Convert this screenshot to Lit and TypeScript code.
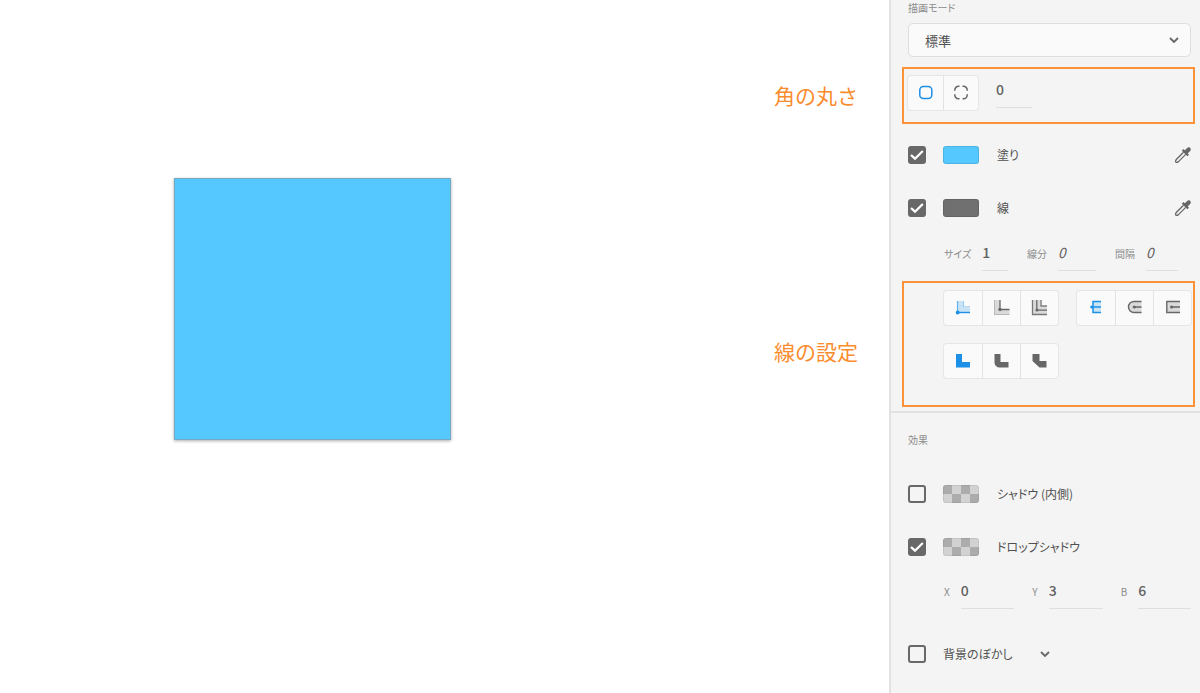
import { LitElement, html, css, svg, nothing, TemplateResult } from "lit";
import { customElement, property, state } from "lit/decorators.js";
import { classMap } from "lit/directives/class-map.js";

const ICONS: Record<string, TemplateResult> = {
  cornerAll: svg`<rect x="1.800" y="1.500" width="12" height="12" rx="3.5" fill="none" stroke="currentColor" stroke-width="1.500"/>`,
  cornerEach: svg`<path d="M1.800 5.800V5A3.700 3.700 0 0 1 5.500 1.300H6.500M9.500 1.300H10.500A3.700 3.700 0 0 1 14.200 5V5.800M14.200 9.200V10A3.700 3.700 0 0 1 10.500 13.700H9.500M6.500 13.700H5.500A3.700 3.700 0 0 1 1.800 10V9.200" fill="none" stroke="currentColor" stroke-width="1.500"/>`,
  alignInner: svg`<path d="M2 1H9V7H15V13H2Z" fill="currentColor" opacity=".22"/>
    <path d="M8.500 1V6.500H15" fill="none" stroke="currentColor" opacity=".3"/>
    <path d="M2.500 1V12" stroke="currentColor" stroke-width="1.200" opacity=".6"/>
    <path d="M2 12.500H15" stroke="currentColor" stroke-width="1.400"/>
    <circle cx="2.700" cy="12.500" r="1.900" fill="currentColor"/>`,
  alignOuter: svg`<path d="M0 0H6V9.500H15.500V15H0Z" fill="currentColor" opacity=".22"/>
    <path d="M.5 0V14.500H15.500" fill="none" stroke="currentColor" opacity=".3"/>
    <path d="M6 0V9.500H15.500" fill="none" stroke="currentColor" stroke-width="1.300"/>
    <circle cx="6" cy="9.500" r="1.700" fill="currentColor"/>`,
  alignCenter: svg`<path d="M0 0H9.500V6.500H15V15H0Z" fill="currentColor" opacity=".22"/>
    <path d="M.5 0V14.500H15M9 0V6H15" fill="none" stroke="currentColor" stroke-width="1.300" opacity=".85"/>
    <path d="M4.800 0V10.200H15" fill="none" stroke="currentColor" stroke-width="1.300"/>
    <circle cx="5" cy="10" r="1.600" fill="currentColor"/>`,
  capButt: svg`<path d="M5 1.500H13V12.500H5Z" fill="currentColor" opacity=".22"/>
    <path d="M13 1.500H5V12.500H13M3 7H13" fill="none" stroke="currentColor" stroke-width="1.500"/>
    <circle cx="3.700" cy="7" r="1.500" fill="currentColor"/>`,
  capRound: svg`<path d="M14.500 1.500H7A5.500 5.500 0 0 0 7 12.500H14.500Z" fill="currentColor" opacity=".22"/>
    <path d="M14.500 1.500H7A5.500 5.500 0 0 0 7 12.500H14.500M7.500 7H14.500" fill="none" stroke="currentColor" stroke-width="1.400"/>
    <circle cx="7.300" cy="7" r="1.600" fill="currentColor"/>`,
  capSquare: svg`<path d="M1.800 1.500H15V12.500H1.800Z" fill="currentColor" opacity=".22"/>
    <path d="M15 1.500H1.800V12.500H15M6.300 7H15" fill="none" stroke="currentColor" stroke-width="1.400"/>
    <circle cx="6.600" cy="7" r="1.600" fill="currentColor"/>`,
  joinMiter: svg`<path d="M1 1H7V9H15V14.500H1Z" fill="currentColor"/>`,
  joinRound: svg`<path d="M.5 1H6.500V9H14.500V14.500H6.500C2.500 14.500 .5 12.500 .5 9Z" fill="currentColor"/>`,
  joinBevel: svg`<path d="M.5 1H7.500V8H14.500V14.500H7.500L.5 8Z" fill="currentColor"/>`,
  dropper: svg`<path d="M8.500 5.300L1.300 12.500Q0 14.300 .8 15.100T3.500 14.600L10.700 7.400" fill="none" stroke="currentColor" stroke-width="1.300"/>
    <path d="M6.800 3.700L8.400 2.100L9.800 3.300L12.200 .9C14.200 -.9 17.100 1.900 15.200 3.900L12.800 6.300L14 7.700L12.400 9.300Z" fill="currentColor"/>`,
  chevron: svg`<path d="M4 6L8 10L12 6" fill="none" stroke="currentColor" stroke-width="1.800"/>`,
};

const icon = (name: string) =>
  html`<svg width="16" height="16" viewBox="0 0 16 16" aria-hidden="true">${ICONS[name]}</svg>`;

const base = css`
  *, *::before, *::after { box-sizing: border-box; }
  button, input, select { font: inherit; color: inherit; margin: 0; }
  svg { display: block; overflow: visible; }
`;

@customElement("segment-group")
class SegmentGroup extends LitElement {
  @property({ attribute: false }) items: [string, string][] = [];
  @property() label = "";
  @property({ type: Boolean }) compact = false;
  @state() private selected = 0;

  static styles = [base, css`
    :host { display: block; }
    .group {
      display: inline-flex;
      vertical-align: top;
      box-shadow: 0 0 0 1px #e6e6e6;
      border-radius: 3px;
      background: #fafafa;
    }
    .segment {
      display: grid;
      place-items: center;
      width: 38px;
      height: 34px;
      padding: 0;
      border: 0;
      background: none;
      color: #676767;
    }
    .compact .segment { width: 35px; }
    .segment + .segment { border-left: 1px solid #e3e3e3; }
    .active { color: #1b90e6; }
  `];

  render() {
    return html`<div class=${classMap({ group: true, compact: this.compact })} role="group" aria-label=${this.label}>
      ${this.items.map(([name, title], i) => html`<button
        class=${classMap({ segment: true, active: i === this.selected })}
        aria-label=${title}
        aria-pressed=${i === this.selected}
        @click=${() => (this.selected = i)}
      >${icon(name)}</button>`)}
    </div>`;
  }
}

@customElement("number-field")
class NumberField extends LitElement {
  @property() label = "";
  @property() value = "0";
  @property({ type: Boolean }) italic = false;

  static styles = [base, css`
    :host { display: block; }
    .field { display: flex; align-items: flex-start; gap: 11px; }
    .name { font-size: 10px; line-height: 36px; color: #8c8c8c; white-space: nowrap; font-feature-settings: "palt"; }
    .name:empty { display: none; }
    .value {
      flex: 1;
      width: 0;
      min-width: 0;
      height: 35px;
      padding: 0 0 2px;
      border: 0;
      border-bottom: 1px solid #dedede;
      border-radius: 0;
      background: none;
      font-size: 14px;
      font-weight: 500;
      color: #606060;
      outline: none;
    }
    .italic { font-style: italic; font-weight: 400; }
  `];

  render() {
    return html`<div class="field">
      <label class="name" for="value">${this.label || nothing}</label>
      <input id="value" class=${classMap({ value: true, italic: this.italic })} .value=${this.value}>
    </div>`;
  }
}

@customElement("option-row")
class OptionRow extends LitElement {
  @property() label = "";
  @property() swatch = "";
  @property({ type: Boolean }) checked = false;
  @property({ type: Boolean }) picker = false;
  @property({ type: Boolean }) expandable = false;

  static styles = [base, css`
    :host { display: block; }
    .row { display: flex; align-items: center; height: 53px; }
    .check {
      appearance: none;
      flex: none;
      width: 18px;
      height: 18px;
      margin-right: 17px;
      border: 2px solid #686868;
      border-radius: 3px;
    }
    .check:checked {
      background: #686868 url("data:image/svg+xml,%3Csvg xmlns='http://www.w3.org/2000/svg' viewBox='0 0 14 14'%3E%3Cpath d='M1 7L5 10.700L12.800 3' fill='none' stroke='%23fff' stroke-width='2.300'/%3E%3C/svg%3E") center / 14px 14px no-repeat;
    }
    .swatch {
      flex: none;
      width: 36px;
      height: 18px;
      margin-right: 18px;
      padding: 0;
      border: 1px solid #0000001c;
      border-radius: 3px;
    }
    .fill { background: #55c9ff; }
    .stroke { background: #707070; }
    .shadow {
      border-color: #00000010;
      background: conic-gradient(#d2d2d2 25%, #acacac 0 50%, #d2d2d2 0 75%, #acacac 0) border-box 0 0 / 18px 18px;
    }
    .name { font-size: 12px; line-height: 20px; color: #505050; font-feature-settings: "palt"; white-space: nowrap; }
    .pick, .expand { display: grid; padding: 0; border: 0; background: none; color: #666; }
    .pick { margin-left: auto; }
    .expand { margin-left: 24px; }
  `];

  render() {
    return html`<div class="row">
      <input class="check" id="check" type="checkbox" .checked=${this.checked}>
      ${this.swatch ? html`<button class="swatch ${this.swatch}" aria-label=${this.label}></button>` : nothing}
      <label class="name" for="check">${this.label}</label>
      ${this.picker ? html`<button class="pick" aria-label="スポイト">${icon("dropper")}</button>` : nothing}
      ${this.expandable ? html`<button class="expand" aria-label="詳細">${icon("chevron")}</button>` : nothing}
    </div>`;
  }
}

@customElement("app-root")
class AppRoot extends LitElement {
  static styles = [base, css`
    :host {
      display: grid;
      grid-template-columns: minmax(0, 1fr) 311px;
      min-height: 100vh;
      background: #fff;
      font-family: "Noto Sans CJK JP", "Noto Sans", sans-serif;
    }
    .canvas { display: flex; justify-content: space-between; }
    .shape {
      width: 277px;
      height: 262px;
      margin: 178px 0 0 174px;
      background: #55c9ff;
      border: 1px solid #74a9c4;
      box-shadow: 0 1px 3px #0005;
    }
    .notes {
      display: flex;
      flex-direction: column;
      gap: 226px;
      padding: 80px 31px 0 0;
      font-size: 21px;
      line-height: 30px;
      color: #fb8c2e;
      white-space: nowrap;
    }
    .note { margin: 0; }
    .panel { border-left: 2px solid #e2e2e2; background: #f4f4f4; }
    .section { padding: 0 9px 0 17px; }
    .caption { display: block; font-size: 10px; line-height: 16px; color: #8c8c8c; font-feature-settings: "palt"; }
    .mode {
      appearance: none;
      display: block;
      width: 100%;
      height: 34px;
      margin: 7px 0 10px;
      padding: 0 16px;
      border: 1px solid #dedede;
      border-radius: 5px;
      background: #fafafa url("data:image/svg+xml,%3Csvg xmlns='http://www.w3.org/2000/svg' viewBox='0 0 16 16'%3E%3Cpath d='M4 6L8 10L12 6' fill='none' stroke='%23666' stroke-width='1.800'/%3E%3C/svg%3E") right 8px center / 16px 16px no-repeat;
      font-size: 13px;
      color: #505050;
    }
    .marked { margin: 0 5px 0 11px; border: 2px solid #fb923a; }
    .corners { display: flex; gap: 18px; height: 57px; padding: 4px; }
    .corners segment-group { padding-top: 3px; }
    .radius { width: 36px; }
    .paint { padding-top: 4px; }
    .metrics { display: flex; justify-content: space-between; padding: 2px 13px 0 36px; }
    .size { width: 64px; }
    .dash { width: 69px; }
    .gap { width: 63px; }
    .lines { display: flex; flex-wrap: wrap; align-content: flex-start; gap: 19px; min-height: 126px; margin-top: 9px; padding: 8px 0 0 40px; }
    .effects { margin-top: 4px; padding-top: 19px; border-top: 2px solid #e2e2e2; }
    .effects .caption { margin-bottom: 19px; }
    .offsets { display: flex; gap: 18px; padding: 1px 0 0 36px; margin-bottom: 17px; }
    .offset { flex: 1; }
  `];

  render() {
    return html`
      <main class="canvas">
        <div class="shape"></div>
        <div class="notes">
          <p class="note">角の丸さ</p>
          <p class="note">線の設定</p>
        </div>
      </main>
      <aside class="panel">
        <div class="section">
          <label class="caption" for="mode">描画モード</label>
          <select class="mode" id="mode"><option>標準</option></select>
        </div>
        <div class="marked corners">
          <segment-group compact label="角の種類" .items=${[["cornerAll", "すべての角"], ["cornerEach", "個別の角"]]}></segment-group>
          <number-field class="radius" value="0"></number-field>
        </div>
        <div class="section">
          <div class="paint">
            <option-row label="塗り" swatch="fill" checked picker></option-row>
            <option-row label="線" swatch="stroke" checked picker></option-row>
          </div>
          <div class="metrics">
            <number-field class="size" label="サイズ" value="1"></number-field>
            <number-field class="dash" label="線分" value="0" italic></number-field>
            <number-field class="gap" label="間隔" value="0" italic></number-field>
          </div>
        </div>
        <div class="marked lines">
          <segment-group label="線の位置" .items=${[["alignInner", "内側"], ["alignOuter", "外側"], ["alignCenter", "中央"]]}></segment-group>
          <segment-group label="線端" .items=${[["capButt", "バット"], ["capRound", "丸型"], ["capSquare", "突出"]]}></segment-group>
          <segment-group label="角の結合" .items=${[["joinMiter", "マイター"], ["joinRound", "ラウンド"], ["joinBevel", "ベベル"]]}></segment-group>
        </div>
        <div class="section effects">
          <span class="caption">効果</span>
          <option-row label="シャドウ (内側)" swatch="shadow"></option-row>
          <option-row label="ドロップシャドウ" swatch="shadow" checked></option-row>
          <div class="offsets">
            <number-field class="offset" label="X" value="0"></number-field>
            <number-field class="offset" label="Y" value="3"></number-field>
            <number-field class="offset" label="B" value="6"></number-field>
          </div>
          <option-row label="背景のぼかし" expandable></option-row>
        </div>
      </aside>
    `;
  }
}
